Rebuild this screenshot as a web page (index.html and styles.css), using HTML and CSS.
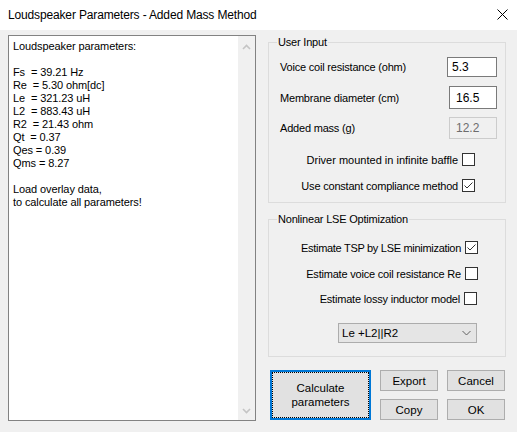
FILE: index.html
```html
<!DOCTYPE html>
<html>
<head>
<meta charset="utf-8">
<link rel="stylesheet" href="styles.css">
</head>
<body>
<div class="window">
  <div class="titlebar">
    <span class="title">Loudspeaker Parameters - Added Mass Method</span>
    <svg class="close" width="11" height="11" viewBox="0 0 11 11"><path d="M0.5 0.5 L10.5 10.5 M10.5 0.5 L0.5 10.5" stroke="#000" stroke-width="1" fill="none"/></svg>
  </div>
  <div class="content">
    <div class="textbox">
      <div class="text">Loudspeaker parameters:

Fs  = 39.21 Hz
Re  = 5.30 ohm[dc]
Le  = 321.23 uH
L2  = 883.43 uH
R2  = 21.43 ohm
Qt  = 0.37
Qes = 0.39
Qms = 8.27

Load overlay data,
to calculate all parameters!</div>
      <div class="scrollbar">
        <svg width="9" height="6" viewBox="0 0 9 6"><path d="M1 5 L4.5 1.5 L8 5" stroke="#c4c4c4" stroke-width="1.6" fill="none"/></svg>
        <svg width="9" height="6" viewBox="0 0 9 6"><path d="M1 1 L4.5 4.5 L8 1" stroke="#c4c4c4" stroke-width="1.6" fill="none"/></svg>
      </div>
    </div>
    <div class="right">
      <fieldset class="group g1">
        <legend>User Input</legend>
        <div class="field f1"><span>Voice coil resistance (ohm)</span><div class="input in1">5.3</div></div>
        <div class="field f2"><span>Membrane diameter (cm)</span><div class="input in2">16.5</div></div>
        <div class="field f3"><span>Added mass (g)</span><div class="input in3 disabled">12.2</div></div>
        <div class="check c1"><span>Driver mounted in infinite baffle</span><span class="box"></span></div>
        <div class="check c2"><span>Use constant compliance method</span><span class="box"><svg width="11" height="11" viewBox="0 0 11 11"><path d="M1.5 5.5 L4 8 L9.5 2.5" stroke="#333" stroke-width="1" fill="none"/></svg></span></div>
      </fieldset>
      <fieldset class="group g2">
        <legend>Nonlinear LSE Optimization</legend>
        <div class="check c3"><span>Estimate TSP by LSE minimization</span><span class="box"><svg width="11" height="11" viewBox="0 0 11 11"><path d="M1.5 5.5 L4 8 L9.5 2.5" stroke="#333" stroke-width="1" fill="none"/></svg></span></div>
        <div class="check c4"><span>Estimate voice coil resistance Re</span><span class="box"></span></div>
        <div class="check c5"><span>Estimate lossy inductor model</span><span class="box"></span></div>
        <div class="select"><span>Le +L2||R2</span><svg width="9" height="6" viewBox="0 0 9 6"><path d="M0.5 1 L4.5 5 L8.5 1" stroke="#606060" stroke-width="1" fill="none"/></svg></div>
      </fieldset>
      <div class="buttons">
        <div class="btn calc"><div class="focus">Calculate<br>parameters</div></div>
        <div class="btn">Export</div>
        <div class="btn">Cancel</div>
        <div class="btn">Copy</div>
        <div class="btn">OK</div>
      </div>
    </div>
  </div>
</div>
</body>
</html>
```

FILE: styles.css
```css
* { box-sizing: border-box; }
html, body { margin: 0; padding: 0; }
body {
  width: 517px;
  height: 432px;
  background: #f0f0f0;
  font-family: "Liberation Sans", Arial, sans-serif;
  font-size: 11px;
  color: #000;
  overflow: hidden;
}
.window { width: 517px; height: 432px; display: flex; flex-direction: column; }
.titlebar {
  height: 30px;
  background: #fff;
  display: flex;
  align-items: center;
  justify-content: space-between;
  padding: 0 9px 1px 8px;
}
.title { font-size: 12px; letter-spacing: -0.15px; }
.close { display: block; }
.content {
  display: flex;
  gap: 12px;
  padding: 5px 0 0 8px;
}
.textbox {
  width: 248px;
  height: 386px;
  border: 1px solid #828282;
  background: #fff;
  display: flex;
}
.text {
  flex: 1;
  white-space: pre;
  font-size: 11px;
  line-height: 13px;
  padding: 4px 0 0 4px;
  letter-spacing: -0.1px;
}
.scrollbar {
  width: 17px;
  background: #f0f0f0;
  display: flex;
  flex-direction: column;
  justify-content: space-between;
  align-items: center;
  padding: 8px 0 6px 0;
}
.scrollbar svg { display: block; }
.right { width: 238px; display: flex; flex-direction: column; letter-spacing: -0.2px; }
.group {
  margin: 0;
  padding: 0;
  border: 1px solid #dcdcdc;
  min-width: 0;
  width: 238px;
}
.group legend {
  margin-left: 8px;
  padding: 0 1px;
  font-size: 11px;
  line-height: 15px;
}
.g1 { padding-bottom: 10px; }
.g2 { margin-top: 9px; padding-bottom: 13px; }
.field {
  display: flex;
  align-items: center;
  justify-content: space-between;
  padding: 0 8px 0 11px;
}
.f1 { margin-top: 7px; height: 20px; }
.f2 { margin-top: 9px; height: 23px; }
.f3 { margin-top: 8px; height: 22px; }
.input {
  background: #fff;
  border: 1px solid #7a7a7a;
  height: 100%;
  display: flex;
  align-items: center;
  font-size: 12px;
  letter-spacing: 0;
}
.in1 { width: 50px; padding-left: 4px; }
.in2 { width: 48px; padding-left: 6px; }
.in3 { width: 48px; padding-left: 6px; }
.input.disabled { background: #f0f0f0; border-color: #cccccc; color: #6d6d6d; }
.check {
  display: flex;
  align-items: center;
  justify-content: flex-end;
  gap: 4px;
  height: 13px;
}
.box {
  width: 13px;
  height: 13px;
  border: 1px solid #333;
  background: #fff;
  flex: none;
  display: flex;
  align-items: center;
  justify-content: center;
}
.box svg { display: block; }
.c1 { margin-top: 14px; padding-right: 30px; letter-spacing: 0; }
.c2 { margin-top: 13px; padding-right: 30px; }
.c3 { margin-top: 14px; padding-right: 27px; letter-spacing: -0.3px; }
.c4 { margin-top: 13px; padding-right: 27px; }
.c5 { margin-top: 12px; padding-right: 28px; }
.select {
  margin: 18px 0 0 69px;
  width: 139px;
  height: 20px;
  background: #e5e5e5;
  border: 1px solid #acacac;
  display: flex;
  align-items: center;
  justify-content: space-between;
  padding: 0 5px 0 3px;
  font-size: 11.5px;
  letter-spacing: 0;
}
.select svg { display: block; }
.buttons {
  margin: 13px 0 0 2px;
  display: grid;
  grid-template-columns: 101px 58px 58px;
  grid-template-rows: 21px 21px;
  column-gap: 9px;
  row-gap: 8px;
}
.btn {
  background: #e1e1e1;
  border: 1px solid #adadad;
  display: flex;
  align-items: center;
  justify-content: center;
  font-size: 11.5px;
  letter-spacing: 0;
}
.btn.calc {
  grid-row: span 2;
  border: 2px solid #0078d7;
  padding: 0;
  align-items: stretch;
  justify-content: stretch;
}
.focus {
  flex: 1;
  border: 1px dotted #000;
  display: flex;
  align-items: center;
  justify-content: center;
  text-align: center;
  line-height: 14px;
}
```
